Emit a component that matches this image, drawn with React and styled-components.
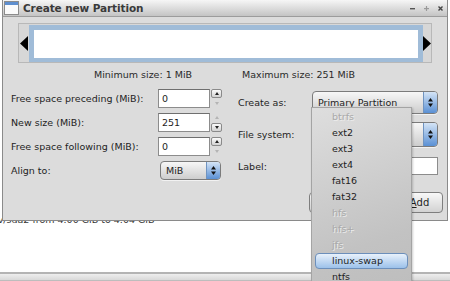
import styled, { createGlobalStyle } from 'styled-components'

const GlobalStyle = createGlobalStyle`
  body {
    margin: 0;
    background: #fff;
  }
`

const Desktop = styled.div`
  position: relative;
  width: 450px;
  height: 281px;
  overflow: hidden;
  background: #fff;
  font-family: "DejaVu Sans", "Noto Sans", sans-serif;
  font-size: 9.5px;
  color: #1e1e1e;
`
// the main window behind the dialog
const BackApp = styled.div`
  display: flex;
  flex-direction: column;
  height: 100%;
`
const LogList = styled.div`
  flex: 1;
  padding-top: 214px;
  overflow: hidden;
`
const LogRow = styled.div`
  white-space: nowrap;
  margin-left: -45px;
  color: #333;
  line-height: 12px;
`
const StatusLine = styled.div`
  height: 6px;
  border-top: 2px solid #b4b4b4;
  background: linear-gradient(#eeeeee, #d9d9d9);
  border-bottom: 1px solid #bdbdbd;
`

const Window = styled.div`
  position: absolute;
  top: 0;
  left: 2px;
  width: 446px;
  height: 221px;
  box-sizing: border-box;
  border: 1px solid #8a8a8a;
  border-top: none;
  background: #dcdcdc;
  display: flex;
  flex-direction: column;
`
const TitleBar = styled.div`
  height: 16px;
  display: flex;
  align-items: center;
  padding: 0 4px 0 1px;
  background: linear-gradient(#f6f6f6, #c4c4c4);
  border-bottom: 1px solid #9c9c9c;
`
const Title = styled.span`
  flex: 1;
  margin-left: 4px;
  font-weight: bold;
  font-size: 10.5px;
  color: #3a3a3a;
  letter-spacing: -0.1px;
`
const TitleButtons = styled.div`
  display: flex;
  align-items: center;
  gap: 9px;
`
const Body = styled.div`
  flex: 1;
  display: flex;
  flex-direction: column;
  padding: 6px 4px 0 8px;
`
const PartFrame = styled.div`
  margin-left: 7px;
  width: 414px;
  height: 40px;
  box-sizing: border-box;
  border: 1px solid #b8b8b8;
  background: #d7d7d7;
  display: flex;
  align-items: center;
`
const ArrowCell = styled.div`
  width: ${p => p.$w}px;
  display: flex;
  justify-content: center;
`
const PartBox = styled.div`
  flex: 1;
  height: 37px;
  box-sizing: border-box;
  border: 5px solid #a0bcd8;
  border-bottom-width: 4px;
  background: #fff;
`
const SizeRow = styled.div`
  display: flex;
  margin-top: 6px;
  padding-left: 83px;
  line-height: 12px;
  color: #2a2a2a;
`
const SizeText = styled.span`
  width: ${p => p.$w ? `${p.$w}px` : 'auto'};
`
const Form = styled.div`
  display: flex;
  gap: 16px;
  margin-top: 5px;
`
const Grid = styled.div`
  display: grid;
  grid-template-columns: ${p => p.$cols};
  grid-auto-rows: ${p => p.$row}px;
  align-items: center;
`
const Label = styled.span`
  white-space: nowrap;
`
const SpinBox = styled.div`
  display: flex;
  height: 19px;
`
const SpinEntry = styled.div`
  width: 52px;
  box-sizing: border-box;
  border: 1px solid #8c8c8c;
  border-top-color: #6f6f6f;
  background: #fff;
  padding-left: 3px;
  line-height: 17px;
`
const SpinButtons = styled.div`
  display: flex;
  flex-direction: column;
  width: 11px;
  margin-left: 1px;
  gap: 1px;
`
const SpinBtn = styled.div`
  flex: 1;
  box-sizing: border-box;
  border: 1px solid ${p => p.$off ? 'transparent' : '#8a8a8a'};
  border-radius: 2px;
  background: ${p => p.$off ? 'transparent' : 'linear-gradient(#fbfbfb, #d2d2d2)'};
  display: flex;
  align-items: center;
  justify-content: center;
  &::after {
    content: '';
    border-left: 2.5px solid transparent;
    border-right: 2.5px solid transparent;
    ${p => p.$down ? 'border-top' : 'border-bottom'}: 3px solid ${p => p.$off ? '#b4b4b4' : '#222'};
  }
`
const Combo = styled.div`
  display: flex;
  width: ${p => p.$w}px;
  height: ${p => p.$h}px;
  margin-left: ${p => p.$ml || 0}px;
  box-sizing: border-box;
  border: 1px solid #7b7b7b;
  border-radius: 4px;
  background: linear-gradient(#f7f7f7, #cdcdcd);
  overflow: hidden;
  box-shadow: 0 1px 0 #f2f2f2;
`
const ComboText = styled.span`
  flex: 1;
  padding-left: 5px;
  align-self: center;
  white-space: nowrap;
`
const ComboArrow = styled.div`
  width: 13px;
  border-left: 1px solid #6f93c0;
  background: linear-gradient(#d4e4f6, #5a90d4);
  display: flex;
  align-items: center;
  justify-content: center;
`
const Entry = styled.div`
  width: 126px;
  height: 18px;
  box-sizing: border-box;
  border: 1px solid #8c8c8c;
  background: #fff;
`
const ButtonRow = styled.div`
  display: flex;
  justify-content: flex-end;
  gap: 4px;
  margin-top: 10px;
`
const Button = styled.div`
  width: ${p => p.$w}px;
  height: 21px;
  box-sizing: border-box;
  border: 1px solid #7e7e7e;
  border-radius: 4px;
  background: linear-gradient(#f8f8f8, #d2d2d2);
  display: flex;
  align-items: center;
  justify-content: center;
  font-size: 10px;
  u { text-decoration: underline; }
`
// popup list of the file system combo
const Menu = styled.div`
  position: absolute;
  left: 311px;
  top: 107px;
  width: 101px;
  height: 190px;
  box-sizing: border-box;
  border: 1px solid #a4a4a4;
  padding-top: 1px;
  background: linear-gradient(160deg, #dedede, #c2c2c2 70%, #bdbdbd);
  box-shadow: 1px 1px 2px rgba(0, 0, 0, 0.2);
`
const MenuItem = styled.div`
  height: 16px;
  margin: 0 3px;
  box-sizing: border-box;
  padding-left: 16px;
  line-height: 14px;
  border: 1px solid ${p => p.$sel ? '#6c8fbb' : 'transparent'};
  border-radius: 4px;
  background: ${p => p.$sel ? 'linear-gradient(#e8f1fb, #9cc1ea)' : 'none'};
  color: ${p => p.$off ? '#a9a9a9' : '#1e1e1e'};
  text-shadow: ${p => p.$off ? '1px 1px 0 #ececec' : 'none'};
  font-size: 9.5px;
`

const Triangle = ({ dir }) => (
  <svg width="8" height="15" viewBox="0 0 8 15">
    {dir === 'left'
      ? <polygon points="8,0 0,7.5 8,15" fill="#000" />
      : <polygon points="0,0 8,7.5 0,15" fill="#000" />}
  </svg>
)

const UpDown = () => (
  <svg width="5" height="9" viewBox="0 0 5 9">
    <polygon points="2.5,0 5,3.5 0,3.5" fill="#111" />
    <polygon points="0,5.5 5,5.5 2.5,9" fill="#111" />
  </svg>
)

const WindowIcon = () => (
  <svg width="15" height="14" viewBox="0 0 15 14">
    <rect x="0.5" y="0.5" width="14" height="13" fill="#fbfbfb" stroke="#8c8c8c" />
    <rect x="1" y="1" width="13" height="3" fill="#5f8fcf" />
  </svg>
)

const TitleControls = () => (
  <TitleButtons>
    <svg width="5" height="5" viewBox="0 0 5 5">
      <rect x="0" y="2" width="5" height="1.4" fill="#555" />
    </svg>
    <svg width="5" height="5" viewBox="0 0 5 5">
      <rect x="0" y="2" width="5" height="1.2" fill="#9a9a9a" />
      <rect x="1.9" y="0" width="1.2" height="5" fill="#9a9a9a" />
    </svg>
    <svg width="5" height="5" viewBox="0 0 5 5">
      <path d="M0.5 0.5 L4.5 4.5 M4.5 0.5 L0.5 4.5" stroke="#444" strokeWidth="1.4" />
    </svg>
  </TitleButtons>
)

const Spin = ({ value, upOff, downOff }) => (
  <SpinBox>
    <SpinEntry>{value}</SpinEntry>
    <SpinButtons>
      <SpinBtn $off={upOff} />
      <SpinBtn $down $off={downOff} />
    </SpinButtons>
  </SpinBox>
)

const fileSystems = [
  ['btrfs', true], ['ext2'], ['ext3'], ['ext4'], ['fat16'], ['fat32'],
  ['hfs', true], ['hfs+', true], ['jfs', true], ['linux-swap', false, true], ['ntfs'],
]

const App = () => {
  return (
    <Desktop>
      <GlobalStyle />
      <BackApp>
        <LogList>
          <LogRow>Grow /dev/sda2 from 4.00 GiB to 4.04 GiB</LogRow>
        </LogList>
        <StatusLine />
      </BackApp>

      <Window>
        <TitleBar>
          <WindowIcon />
          <Title>Create new Partition</Title>
          <TitleControls />
        </TitleBar>
        <Body>
          <PartFrame>
            <ArrowCell $w={10}><Triangle dir="left" /></ArrowCell>
            <PartBox />
            <ArrowCell $w={8}><Triangle dir="right" /></ArrowCell>
          </PartFrame>
          <SizeRow>
            <SizeText $w={148}>Minimum size: 1 MiB</SizeText>
            <SizeText>Maximum size: 251 MiB</SizeText>
          </SizeRow>
          <Form>
            <Grid $cols="147px 64px" $row={24}>
              <Label>Free space preceding (MiB):</Label>
              <Spin value="0" downOff />
              <Label>New size (MiB):</Label>
              <Spin value="251" upOff />
              <Label>Free space following (MiB):</Label>
              <Spin value="0" downOff />
              <Label>Align to:</Label>
              <Combo $w={61} $h={19} $ml={2}>
                <ComboText>MiB</ComboText>
                <ComboArrow><UpDown /></ComboArrow>
              </Combo>
            </Grid>
            <Grid $cols="74px 126px" $row={32}>
              <Label>Create as:</Label>
              <Combo $w={126} $h={23}>
                <ComboText>Primary Partition</ComboText>
                <ComboArrow><UpDown /></ComboArrow>
              </Combo>
              <Label>File system:</Label>
              <Combo $w={126} $h={25}>
                <ComboText />
                <ComboArrow><UpDown /></ComboArrow>
              </Combo>
              <Label>Label:</Label>
              <Entry />
            </Grid>
          </Form>
          <ButtonRow>
            <Button $w={83} />
            <Button $w={47}><u>A</u>dd</Button>
          </ButtonRow>
        </Body>
      </Window>

      <Menu>
        {fileSystems.map(([name, off, sel]) => (
          <MenuItem key={name} $off={off} $sel={sel}>{name}</MenuItem>
        ))}
      </Menu>
    </Desktop>
  )
}

export default App
